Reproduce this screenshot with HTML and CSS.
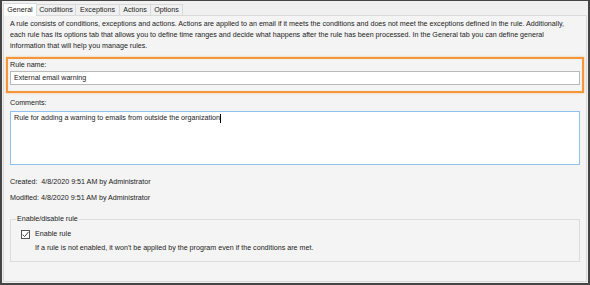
FILE: index.html
```html
<!DOCTYPE html>
<html lang="en">
<head>
<meta charset="UTF-8">
<meta name="viewport" content="width=device-width, initial-scale=1.0">
<title>Rule properties</title>
<link rel="stylesheet" href="styles.css">
</head>
<body>

<div class="window">
  <div class="tabs">
    <div class="tab tab-general active">General</div>
    <div class="tab tab-conditions">Conditions</div>
    <div class="tab tab-exceptions">Exceptions</div>
    <div class="tab tab-actions">Actions</div>
    <div class="tab tab-options">Options</div>
  </div>

  <div class="panel">
    <p class="intro">A rule consists of conditions, exceptions and actions. Actions are applied to an email if it meets the conditions and does not meet the exceptions defined in the rule. Additionally, each rule has its options tab that allows you to define time ranges and decide what happens after the rule has been processed. In the General tab you can define general information that will help you manage rules.</p>

    <div class="highlight">
      <label class="label" for="ruleName">Rule name:</label>
      <input class="field" type="text" id="ruleName" value="External email warning">
    </div>

    <label class="label comments-label" for="comments">Comments:</label>
    <div class="textarea">Rule for adding a warning to emails from outside the organization<span class="caret"></span></div>

    <div class="meta">
      <div>Created:&nbsp; 4/8/2020 9:51 AM by Administrator</div>
      <div>Modified: 4/8/2020 9:51 AM by Administrator</div>
    </div>

    <fieldset class="group">
      <legend>Enable/disable rule</legend>
      <div class="check-row">
        <span class="checkbox">
          <svg width="9" height="9" viewBox="0 0 9 9"><path d="M1.6 4.6 L3.6 6.6 L7.6 1.8" fill="none" stroke="#333" stroke-width="0.9"/></svg>
        </span>
        <span>Enable rule</span>
      </div>
      <div class="hint">If a rule is not enabled, it won't be applied by the program even if the conditions are met.</div>
    </fieldset>
  </div>
</div>

</body>
</html>
```

FILE: styles.css
```css
html, body {
  margin: 0;
  padding: 0;
}
body {
  font-family: "Liberation Sans", Arial, sans-serif;
  font-size: 7.15px;
  color: #222;
  background: #f0f0f0;
}
.window {
  box-sizing: border-box;
  width: 590px;
  height: 285px;
  border: 2px solid #454545;
  border-top-width: 1px;
  background: #f0f0f0;
  padding: 1px;
  display: flex;
  flex-direction: column;
}
.tabs {
  display: flex;
  height: 13px;
  align-items: flex-end;
}
.tab {
  box-sizing: border-box;
  height: 11px;
  line-height: 11px;
  text-align: center;
  border: 1px solid #d9d9d9;
  border-bottom: none;
  border-left: none;
  background: #f0f0f0;
}
.tab.active {
  height: 13px;
  line-height: 13px;
  background: #fff;
  border-left: 1px solid #d9d9d9;
  margin-bottom: -1px;
  position: relative;
}
.tab-general { width: 34px; }
.tab-conditions { width: 39px; }
.tab-exceptions { width: 44px; }
.tab-actions { width: 31px; }
.tab-options { width: 32px; }
.panel {
  flex: 1;
  border: 1px solid #d9d9d9;
  background: #f4f4f4;
  padding: 3px 6px 0 6px;
}
.intro {
  margin: 0;
  line-height: 11px;
}
.highlight {
  margin: 5px -4px 0 -4px;
  padding: 2px 2px 6px 2px;
  border: 2px solid #f5963a;
  box-shadow: 0 0 2px rgba(245, 150, 58, 0.6), inset 0 0 2px rgba(0, 0, 0, 0.06);
}
.label {
  display: block;
  line-height: 9px;
  margin-bottom: 1px;
}
.field {
  display: block;
  box-sizing: border-box;
  width: 100%;
  height: 14px;
  margin: 0;
  padding: 0 3px;
  border: 1px solid #b9b9b9;
  background: #fff;
  font: inherit;
  color: inherit;
}
.comments-label {
  margin-top: 6px;
  margin-bottom: 3px;
}
.textarea {
  box-sizing: border-box;
  height: 54px;
  border: 1px solid #8fc1f0;
  background: #fff;
  padding: 2px 3px;
  line-height: 9px;
}
.caret {
  display: inline-block;
  width: 1px;
  height: 9px;
  background: #000;
  vertical-align: top;
}
.meta {
  margin-top: 9px;
  line-height: 16px;
}
.group {
  margin: 9px 0 0 0;
  padding: 5px 0 8px 0;
  border: 1px solid #dcdcdc;
}
.group legend {
  padding: 0 1px;
  margin-left: 5px;
  line-height: 9px;
}
.check-row {
  display: flex;
  align-items: center;
  gap: 5px;
  padding-left: 10px;
  line-height: 10px;
}
.checkbox {
  box-sizing: border-box;
  width: 9px;
  height: 9px;
  border: 1px solid #555;
  background: #fff;
  display: flex;
}
.checkbox svg {
  margin: -1px;
}
.hint {
  padding-left: 24px;
  margin-top: 4px;
  line-height: 10px;
}
```
